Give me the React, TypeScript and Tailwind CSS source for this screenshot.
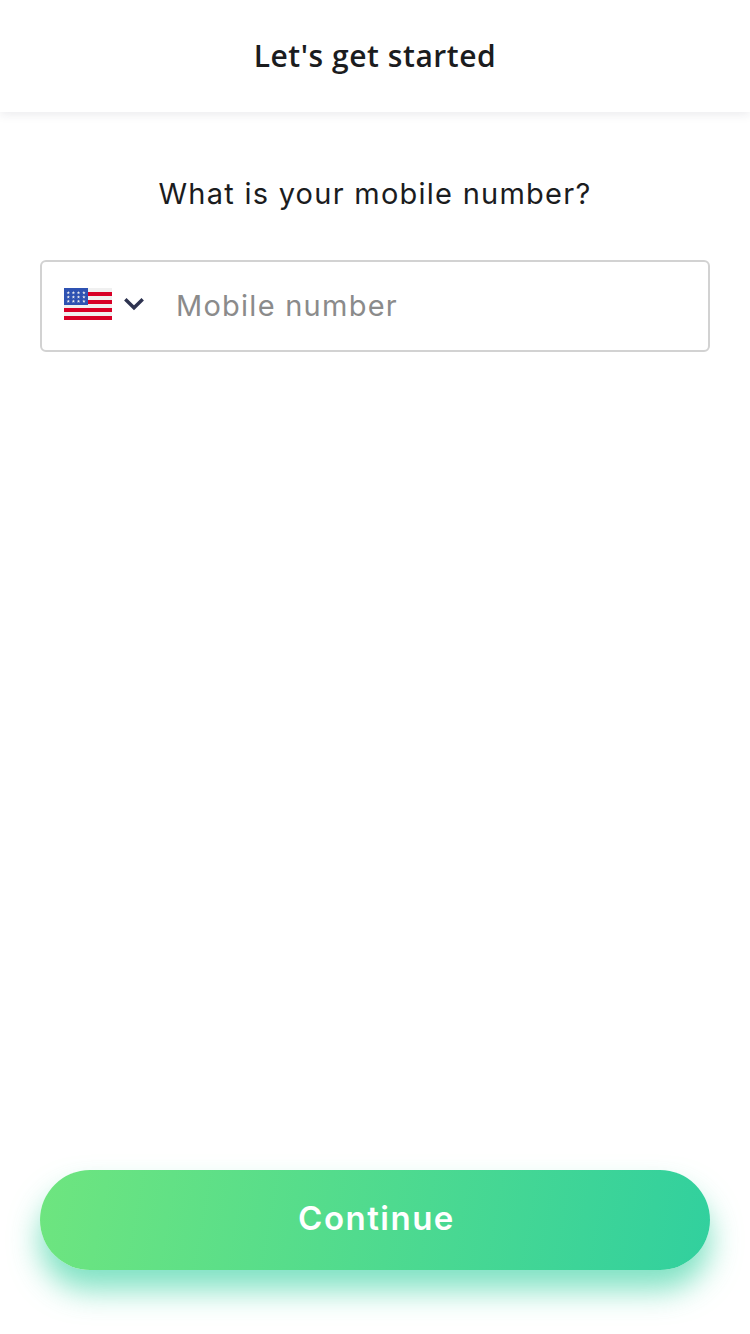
function FlagIcon() {
  const xs = [4.3, 9.4, 14.5, 19.9];
  const ys = [4.7, 9, 13.2];
  return (
    <svg width="48" height="32" viewBox="0 0 48 32" className="shrink-0">
      <rect width="48" height="32" fill="#f0f0f0" />
      {[4, 12, 20, 28].map((y) => (
        <rect key={y} y={y} width="48" height="4" fill="#d80027" />
      ))}
      <rect width="24" height="17" fill="#2e52b2" />
      {ys.map((y) =>
        xs.map((x) => (
          <path
            key={`${x}-${y}`}
            transform={`translate(${x} ${y})`}
            d="M0-1.7.45-.5 1.7-.5.7.25 1.05 1.45 0 .75-1.05 1.45-.7.25-1.7-.5-.45-.5Z"
            fill="#f0f0f0"
          />
        ))
      )}
    </svg>
  );
}

export default function App() {
  return (
    <div className="flex h-[1334px] w-full flex-col overflow-hidden bg-white font-['Inter',sans-serif] text-[#1b1c1e]">
      <header className="flex h-28 shrink-0 items-center justify-center bg-white shadow-[0_2px_10px_rgba(40,40,70,0.1)]">
        <h1 className="font-['Open_Sans',sans-serif] text-[30px] leading-10 font-[650] tracking-[0.55px]">Let's get started</h1>
      </header>
      <main className="flex flex-1 flex-col px-10 pt-[62px] pb-16">
        <h2 className="text-center text-[29px] leading-10 tracking-[1.25px]">What is your mobile number?</h2>
        <div className="mt-[46px] flex h-[92px] items-center rounded-md border-2 border-[#d2d2d2] pl-[22px]">
          <button type="button" aria-label="Country" className="mb-1 flex items-center gap-3">
            <FlagIcon />
            <svg width="20" height="14" viewBox="0 0 20 14" fill="none">
              <path d="M1.3 2.2 10 10.8 18.7 2.2" stroke="#2e3350" strokeWidth="3.4" />
            </svg>
          </button>
          <input
            type="tel"
            placeholder="Mobile number"
            className="ml-8 h-full min-w-0 flex-1 pb-0.5 text-[29px] tracking-[1.25px] outline-none placeholder:text-[#8b8b8b]"
          />
        </div>
        <button
          type="button"
          className="mt-auto h-[100px] shrink-0 rounded-full bg-linear-[100deg] from-[#6ee57f] to-[#31d09e] pb-0.5 pl-[3px] text-[33px] font-semibold tracking-[1.5px] text-white shadow-[0_20px_30px_rgba(49,208,158,0.62)]"
        >
          Continue
        </button>
      </main>
    </div>
  );
}
